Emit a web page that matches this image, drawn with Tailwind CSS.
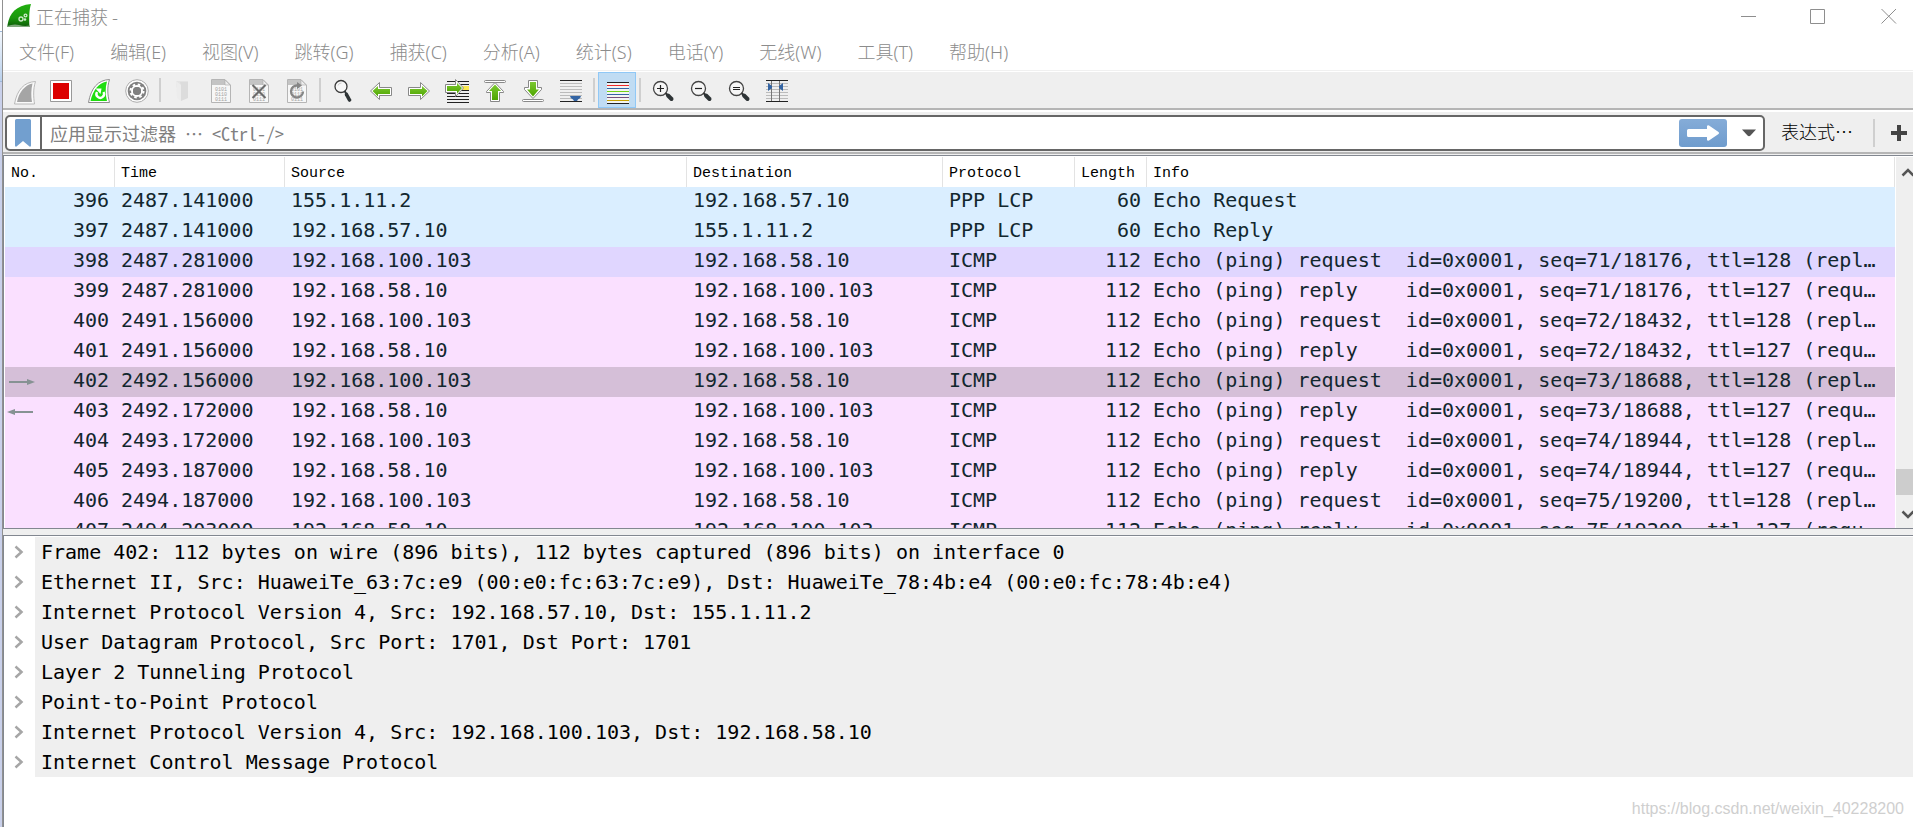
<!DOCTYPE html>
<html lang="zh-CN">
<head>
<meta charset="utf-8">
<title>正在捕获 -</title>
<script src="https://cdn.jsdelivr.net/npm/@tailwindcss/browser@4"></script>
</head>
<body class="bg-white font-['Noto_Sans_CJK_SC',sans-serif]">
<div class="flex min-h-screen overflow-hidden">
  <!-- sliver of the desktop behind the window -->
  <div class="flex w-[2px] shrink-0 flex-col" aria-hidden="true">
    <div class="h-[31px] bg-white"></div>
    <div class="h-[51px] border-y border-[#9db8da] bg-linear-to-b from-[#f4f8fd] to-[#b9d0ec]"></div>
    <div class="grow bg-[#c9d0ea]"></div>
  </div>

  <div class="flex min-w-0 grow flex-col border-l border-[#919191]">
    <header class="flex h-[34px] items-start justify-between pl-1">
      <div class="flex items-center pt-1">
        <svg class="h-6 w-6" viewBox="0 0 24 24" aria-hidden="true">
          <defs>
            <linearGradient id="fin" x1="0" y1="0" x2="0" y2="1"><stop offset="0" stop-color="#22b010"/><stop offset=".6" stop-color="#1b970d"/><stop offset="1" stop-color="#0c5a08"/></linearGradient>
            <linearGradient id="grn" x1="0" y1="0" x2="0" y2="1"><stop offset="0" stop-color="#7cc832"/><stop offset="1" stop-color="#4fa600"/></linearGradient>
          </defs>
          <path d="M.5 21C2.500 9 9 1.500 24 0C22 6 22 15 22.500 23H.5Z" fill="url(#fin)"/>
          <path d="M0 22Q7 19.500 12 21T23 21.500V23H0Z" fill="#7fa87c"/>
          <g fill="none" stroke="#cfe9cb" stroke-width="1.300"><circle cx="14" cy="15" r="2"/><circle cx="18.500" cy="11.500" r="1.400"/><circle cx="18" cy="15.500" r=".7"/></g>
        </svg>
        <h1 class="ml-[5px] text-[18px] leading-6 font-light text-[#8a8a8a]">正在捕获 -</h1>
      </div>
      <div class="flex pt-2 pr-4">
        <button aria-label="最小化" class="mr-[53px]"><svg class="h-4 w-4" viewBox="0 0 16 16"><path d="M0 8.500H15" stroke="#8e8e8e"/></svg></button>
        <button aria-label="最大化" class="mr-[55px]"><svg class="h-4 w-4" viewBox="0 0 16 16"><path d="M.5 1.500H14.500V15.500H.5Z" fill="none" stroke="#8e8e8e"/></svg></button>
        <button aria-label="关闭"><svg class="h-4 w-4" viewBox="0 0 16 16"><path d="M.5 1L15 15.500M15 1L.5 15.500" stroke="#8e8e8e"/></svg></button>
      </div>
    </header>

    <nav class="flex h-[37px] items-center gap-9 border-b border-[#f0f0f0] pl-4 font-['Noto_Sans','Noto_Sans_CJK_SC',sans-serif] text-[18px] leading-6 font-light text-[#8c8c8c]">
      <button>文件(F)</button><button>编辑(E)</button><button>视图(V)</button><button>跳转(G)</button><button>捕获(C)</button><button>分析(A)</button><button>统计(S)</button><button>电话(Y)</button><button>无线(W)</button><button>工具(T)</button><button>帮助(H)</button>
    </nav>

    <div role="toolbar" class="mt-px flex h-[38px] items-center border-b-2 border-[#b5b5b5] bg-[#efefef] pl-px [&>button]:flex [&>button]:h-9 [&>button]:w-[38px] [&>button]:items-center [&>button]:justify-center [&_svg]:h-[25px] [&_svg]:w-6 [&_svg]:overflow-visible">
      <button aria-label="开始捕获"><svg viewBox="0 0 24 25"><path d="M3.500 26C6 12 13 4 24.500 3.500C22 11 22.500 19 23.500 26Z" fill="#fafafa" stroke="#b9b9b9"/><path d="M6 24C8 14 14 7 21.500 5.500C20 12 20 18 21 24Z" fill="#a5a5a5"/></svg></button>
      <button aria-label="停止捕获"><svg viewBox="0 0 24 25"><path d="M1.500 2.500H22.500V23.500H1.500Z" fill="#fff" stroke="#999"/><path d="M4 5H20V21H4Z" fill="#dc0000"/></svg></button>
      <button aria-label="重新开始捕获"><svg viewBox="0 0 24 25"><path d="M1.500 24.500C4 10 11 2 22.500 1.500C20 9 20.500 17 22.500 24.500Z" fill="#fff" stroke="#8d8d8d"/><path d="M3.500 23C6 12 12 4.500 20 3.500C18 10 18.500 17 20 23Z" fill="#1fdd10"/><path d="M10 14A3.800 3.800 0 1 0 16.500 14" fill="none" stroke="#fff" stroke-width="2.400"/><path d="M8.500 10.500H14.500L13.500 16Z" fill="#fff"/></svg></button>
      <button aria-label="捕获选项"><svg viewBox="0 0 24 25"><circle cx="12" cy="13" r="11.300" fill="#fff" stroke="#adadad"/><circle cx="12" cy="13" r="9.300" fill="#808080"/><circle cx="12" cy="13" r="5" fill="none" stroke="#fff" stroke-width="2"/><circle cx="12" cy="13" r="6.500" fill="none" stroke="#fff" stroke-width="2" stroke-dasharray="2.500 2.600"/><circle cx="12" cy="13" r="4" fill="#808080"/></svg></button>
      <span class="flex h-6 w-2 justify-center"><i class="w-0.5 bg-[#cfcfcf]"></i></span>
      <button aria-label="打开"><svg viewBox="0 0 24 25"><path d="M5 3H17V8H11V22L5 8Z" fill="#e4e4e4"/><path d="M9 4H17V20L10 23V8Z" fill="#dcdcdc"/><path d="M5 3L10 7V23L6 20Z" fill="#ececec"/></svg></button>
      <button aria-label="保存"><svg viewBox="0 0 24 25"><path d="M2.500 1.500H16L21.500 7V24.500H2.500Z" fill="#f7f7f7" stroke="#b5b5b5"/><path d="M3 2H16V7H3Z" fill="#c4c4c4"/><path d="M16 2V7H21Z" fill="#ededed" stroke="#aaa" stroke-width=".6"/><g font-family="Liberation Mono" font-size="5" fill="#a2a2a2"><text x="6" y="13">0101</text><text x="6" y="18">0110</text><text x="6" y="23">0111</text></g></svg></button>
      <button aria-label="关闭文件"><svg viewBox="0 0 24 25"><path d="M2.500 1.500H16L21.500 7V24.500H2.500Z" fill="#f7f7f7" stroke="#b5b5b5"/><path d="M3 2H16V7H3Z" fill="#c4c4c4"/><path d="M16 2V7H21Z" fill="#ededed" stroke="#aaa" stroke-width=".6"/><g font-family="Liberation Mono" font-size="5" fill="#a2a2a2"><text x="6" y="13">0101</text><text x="6" y="18">0110</text><text x="6" y="23">0111</text></g><path d="M5.500 7L18.500 20M18.500 7L5.500 20" stroke="#6b6b6b" stroke-width="2"/></svg></button>
      <button aria-label="重新加载"><svg viewBox="0 0 24 25"><path d="M2.500 1.500H16L21.500 7V24.500H2.500Z" fill="#f7f7f7" stroke="#b5b5b5"/><path d="M3 2H16V7H3Z" fill="#c4c4c4"/><path d="M16 2V7H21Z" fill="#ededed" stroke="#aaa" stroke-width=".6"/><g font-family="Liberation Mono" font-size="5" fill="#a2a2a2"><text x="6" y="13">0101</text><text x="6" y="18">0110</text><text x="6" y="23">0111</text></g><path d="M12.500 7.500A6 6 0 1 0 18 13.500" fill="none" stroke="#858585" stroke-width="2.300"/><path d="M12 4L17 7.500L12 11Z" fill="#858585"/></svg></button>
      <span class="flex h-6 w-2 justify-center"><i class="w-0.5 bg-[#cfcfcf]"></i></span>
      <button aria-label="查找"><svg viewBox="0 0 24 25"><circle cx="10" cy="8.500" r="6" fill="#f8f8f8" stroke="#3a3a3a" stroke-width="1.300"/><path d="M7 7.500A3.500 3.500 0 0 1 10.500 5" fill="none" stroke="#ccc"/><path d="M13.500 13L15.500 16" stroke="#2e3436" stroke-width="2"/><path d="M15.500 16.500L18.500 22" stroke="#2e3436" stroke-width="3.600" stroke-linecap="round"/></svg></button>
      <button aria-label="上一个分组"><svg viewBox="0 0 24 25"><path d="M1.500 13L10.500 4.500V9.500H22.500V17.500H10.500V21.500Z" fill="#fff" stroke="#888" stroke-linejoin="round"/><path d="M3.500 13L9 8V11H21V16H9V18.500Z" fill="url(#grn)"/></svg></button>
      <button aria-label="下一个分组"><svg viewBox="0 0 24 25"><path d="M22.500 13L13.500 4.500V9.500H1.500V17.500H13.500V21.500Z" fill="#fff" stroke="#888" stroke-linejoin="round"/><path d="M20.500 13L15 8V11H3V16H15V18.500Z" fill="url(#grn)"/></svg></button>
      <button aria-label="转到分组"><svg viewBox="0 0 24 25"><path d="M17 8H24V12H17Z" fill="#fce94f"/><path d="M2 3.500H24M2 6.500H24M2 15.500H24M2 18.500H24M2 21.500H24M2 24.500H24M16 12.500H24" stroke="#222"/><path d="M18.500 10L10.500 1.500V6.500H.5V14.500H10.500V18.500Z" fill="#fff" stroke="#888" stroke-linejoin="round"/><path d="M17 10L12 5V8H2V13H12V15.500Z" fill="url(#grn)"/></svg></button>
      <button aria-label="首个分组"><svg viewBox="0 0 24 25"><rect x="1.500" y="2.500" width="21" height="2" rx="1" fill="#fff" stroke="#888"/><path d="M12 4.500L20.500 13.500V14.500H16.500V23.500H7.500V14.500H3.500V13.500Z" fill="#fff" stroke="#888" stroke-linejoin="round"/><path d="M12 6.500L18 13H15V22H9V13H6Z" fill="url(#grn)"/></svg></button>
      <button aria-label="最新分组"><svg viewBox="0 0 24 25"><rect x="1.500" y="21.500" width="21" height="2" rx="1" fill="#fff" stroke="#888"/><path d="M12 20.500L20.500 11.500V9.500H16.500V2.500H7.500V9.500H3.500V11.500Z" fill="#fff" stroke="#888" stroke-linejoin="round"/><path d="M12 18.500L18 11.500H15V4H9V11.500H6Z" fill="url(#grn)"/></svg></button>
      <button aria-label="自动滚动"><svg viewBox="0 0 24 25"><path d="M1 2.500H23M1 23.500H23" stroke="#222"/><path d="M1 5.500H23M1 8.500H23M1 11.500H23M1 14.500H23M1 17.500H23M1 20.500H23" stroke="#bbb"/><path d="M11 18H22Q21.500 21 19 21.500L18 23H15L14 21.500Q11.500 21 11 18Z" fill="#3465a4"/></svg></button>
      <span class="flex h-6 w-2 justify-center"><i class="w-0.5 bg-[#cfcfcf]"></i></span>
      <button aria-label="着色分组" aria-pressed="true" class="border border-[#90c8f6] bg-[#c0dcf3]"><svg viewBox="0 0 24 25"><path d="M2 4H24V25H2Z" fill="#f2f4f4"/><path d="M2 4.500H24M2 25.500H24" stroke="#222"/><path d="M2 7.500H24" stroke="#ef2929"/><path d="M2 10.500H24M2 16.500H24" stroke="#3465a4"/><path d="M2 13.500H24" stroke="#73d216"/><path d="M2 19.500H24" stroke="#75507b"/><path d="M2 22.500H24" stroke="#c4a000"/></svg></button>
      <span class="flex h-6 w-2 justify-center"><i class="w-0.5 bg-[#cfcfcf]"></i></span>
      <button aria-label="放大"><svg viewBox="0 0 24 25"><circle cx="9.500" cy="10.500" r="7" fill="#f6f6f6" stroke="#444" stroke-width="1.300"/><path d="M6 10.500H13M9.500 7V14" stroke="#222" stroke-width="1.200"/><path d="M14.500 15L17 17.500" stroke="#333" stroke-width="2"/><path d="M17 17.500L20.500 21" stroke="#2e3436" stroke-width="4" stroke-linecap="round"/></svg></button>
      <button aria-label="缩小"><svg viewBox="0 0 24 25"><circle cx="9.500" cy="10.500" r="7" fill="#f6f6f6" stroke="#444" stroke-width="1.300"/><path d="M6 10.500H13" stroke="#222" stroke-width="1.200"/><path d="M14.500 15L17 17.500" stroke="#333" stroke-width="2"/><path d="M17 17.500L20.500 21" stroke="#2e3436" stroke-width="4" stroke-linecap="round"/></svg></button>
      <button aria-label="正常大小"><svg viewBox="0 0 24 25"><circle cx="9.500" cy="10.500" r="7" fill="#f6f6f6" stroke="#444" stroke-width="1.300"/><path d="M6 9.500H13M6 11.500H13" stroke="#222"/><path d="M14.500 15L17 17.500" stroke="#333" stroke-width="2"/><path d="M17 17.500L20.500 21" stroke="#2e3436" stroke-width="4" stroke-linecap="round"/></svg></button>
      <button aria-label="调整列宽"><svg viewBox="0 0 24 25"><path d="M1 5.500H23M1 8.500H23M1 11.500H23M1 14.500H23M1 17.500H23M1 20.500H23" stroke="#bbb"/><path d="M1 2.500H23M1 23.500H23" stroke="#222"/><path d="M6.500 3V23M14.500 3V23" stroke="#777"/><path d="M3 5L7 8V10L3 13ZM18 5L14 8V10L18 13Z" fill="#3465a4"/></svg></button>
    </div>

    <form class="flex h-[44px] items-center border-t-2 border-b-2 border-t-white border-b-[#b5b5b5] bg-[#efefef] pt-0.5 pl-0.5" onsubmit="return false">
      <div class="flex h-9 min-w-0 grow items-center rounded-[5px] border-2 border-[#666] bg-white pr-[7px]">
        <button type="button" aria-label="书签" class="flex h-8 w-[35px] shrink-0 items-center justify-center border-r-2 border-[#666] pr-px">
          <svg class="h-7 w-4" viewBox="0 0 16 28"><path d="M0 1.500Q0 0 1.500 0H14.500Q16 0 16 1.500V26.500Q16 28 14.500 27.500L8 22L1.500 27.500Q0 28 0 26.500Z" fill="#729fcf"/></svg>
        </button>
        <input type="text" aria-label="显示过滤器" placeholder="应用显示过滤器 ⋯ &lt;Ctrl-/&gt;" class="h-8 min-w-0 grow pl-2 font-['Noto_Sans_Mono_CJK_SC','Noto_Sans_CJK_SC',monospace] text-[18px] font-light outline-none placeholder:text-[#808080]">
        <button aria-label="应用" class="flex h-7 w-12 items-center justify-center rounded-[3px] bg-linear-to-b from-[#85acd8] to-[#6f9ccd]">
          <svg class="h-4 w-8" viewBox="0 0 32 16"><path d="M1.500 4H20V1Q20.500 0 22 .5L31.500 7Q32.500 8 31.500 9L22 15.500Q20.500 16 20 15V12H1.500Q0 12 0 10.500V5.500Q0 4 1.500 4Z" fill="#fff"/></svg>
        </button>
        <button type="button" aria-label="历史" class="ml-[15px]"><svg class="h-2 w-3.5" viewBox="0 0 14 8"><path d="M0 .5H14L8.500 6.500Q7 8 5.500 6.500Z" fill="#555"/></svg></button>
      </div>
      <button type="button" class="ml-4 pb-1 text-[18px] leading-6 font-light text-black">表达式⋯</button>
      <i class="mr-4 ml-5 h-7 w-0.5 bg-[#cfcfcf]"></i>
      <button type="button" aria-label="添加" class="mr-1.5"><svg class="h-4 w-4" viewBox="0 0 16 16"><path d="M8 0V16M0 8H16" stroke="#444" stroke-width="4"/></svg></button>
    </form>

    <main class="flex grow flex-col border-t border-[#f0f0f0] bg-[#efefef]">
      <section class="flex h-[374px] border-y border-l border-[#828790] bg-white pt-px pl-px">
        <div class="min-w-0 grow overflow-hidden">
          <table class="w-full table-fixed border-separate border-spacing-0 text-left whitespace-pre text-[#12272e] [&_td]:overflow-hidden [&_td]:p-0 [&_td]:pl-1.5 [&_td]:align-top [&_th]:border-r [&_th]:border-[#e3e3e3] [&_th]:p-0 [&_th]:pt-1 [&_th]:pl-1.5">
            <colgroup><col class="w-[110px]"><col class="w-[170px]"><col class="w-[402px]"><col class="w-[256px]"><col class="w-[132px]"><col class="w-[72px]"><col></colgroup>
            <thead class="font-['Liberation_Mono',monospace] text-[15px] text-black">
              <tr class="h-[30px] [&>th]:font-normal"><th scope="col">No.</th><th scope="col">Time</th><th scope="col">Source</th><th scope="col">Destination</th><th scope="col">Protocol</th><th scope="col">Length</th><th scope="col">Info</th></tr>
            </thead>
            <tbody id="packets" class="font-['DejaVu_Sans_Mono',monospace] text-[20px] leading-[26px]"></tbody>
          </table>
        </div>
        <div class="ml-px flex w-[17px] shrink-0 flex-col items-end overflow-hidden bg-[#efefef]" role="scrollbar" aria-controls="packets" aria-valuenow="88">
          <svg class="mt-2.5 h-3 w-3" viewBox="0 0 12 12"><path d="M1.500 8.500L7 3L12.500 8.500" fill="none" stroke="#555" stroke-width="2.500"/></svg>
          <span class="mt-[290px] h-[26px] w-full bg-[#cdcdcd]"></span>
          <svg class="mt-3.5 h-3 w-3" viewBox="0 0 12 12"><path d="M1.500 2.500L7 8L12.500 2.500" fill="none" stroke="#555" stroke-width="2.500"/></svg>
        </div>
      </section>

      <section class="mt-1.5 flex grow flex-col border-t border-l border-[#828790] bg-white pt-px pl-px">
        <ul id="details" class="font-['DejaVu_Sans_Mono',monospace] text-[20px] leading-[30px] text-black"></ul>
        <p class="mt-auto pr-[9px] pb-1.5 text-right font-['Liberation_Sans',sans-serif] text-[16px] leading-6 text-[#cfcfcf]">https://blog.csdn.net/weixin_40228200</p>
      </section>
    </main>
  </div>
</div>

<script>
const A = '192.168.100.103', B = '192.168.58.10';
const ping = (no, time, req, seq, peer) => [no, time, req ? A : B, req ? B : A, 'ICMP', 112,
  `Echo (ping) ${req ? 'request' : 'reply  '}  id=0x0001, seq=${seq}, ttl=${req ? 128 : 127} (${req ? 'reply' : 'request'} in ${peer})`];
const packets = [
  [396, '2487.141000', '155.1.11.2', '192.168.57.10', 'PPP LCP', 60, 'Echo Request'],
  [397, '2487.141000', '192.168.57.10', '155.1.11.2', 'PPP LCP', 60, 'Echo Reply'],
  ping(398, '2487.281000', true, '71/18176', 399),
  ping(399, '2487.281000', false, '71/18176', 398),
  ping(400, '2491.156000', true, '72/18432', 401),
  ping(401, '2491.156000', false, '72/18432', 400),
  ping(402, '2492.156000', true, '73/18688', 403),
  ping(403, '2492.172000', false, '73/18688', 402),
  ping(404, '2493.172000', true, '74/18944', 405),
  ping(405, '2493.187000', false, '74/18944', 404),
  ping(406, '2494.187000', true, '75/19200', 407),
  ping(407, '2494.203000', false, '75/19200', 406),
];
const rowColor = no => no < 398 ? 'bg-[#daeeff]' : no === 398 ? 'bg-[#e0d6ff]' : no === 402 ? 'bg-[#d5bfd8]' : 'bg-[#fae0ff]';
const arrows = {
  402: '<svg class="mt-1 ml-[-2px] h-2 w-[27px]" viewBox="0 0 27 8"><path d="M0 4H20" stroke="#869293" stroke-width="2"/><path d="M18 1L26 4L18 7Z" fill="#869293"/></svg>',
  403: '<svg class="mt-1 ml-[-4px] h-2 w-[27px]" viewBox="0 0 27 8"><path d="M6 4H26" stroke="#869293" stroke-width="2"/><path d="M8 1L0 4L8 7Z" fill="#869293"/></svg>',
};
document.getElementById('packets').innerHTML = packets.map(([no, time, src, dst, proto, len, info]) =>
  `<tr class="h-[30px] ${rowColor(no)}"><td><div class="flex items-center justify-between pr-1.5">${arrows[no] || '<span></span>'}<span>${no}</span></div></td>` +
  `<td>${time}</td><td>${src}</td><td>${dst}</td><td>${proto}</td><td><div class="pr-1.5 text-right">${len}</div></td><td><div class="truncate pr-3 whitespace-pre">${info}</div></td></tr>`).join('');

document.getElementById('details').innerHTML = [
  'Frame 402: 112 bytes on wire (896 bits), 112 bytes captured (896 bits) on interface 0',
  'Ethernet II, Src: HuaweiTe_63:7c:e9 (00:e0:fc:63:7c:e9), Dst: HuaweiTe_78:4b:e4 (00:e0:fc:78:4b:e4)',
  'Internet Protocol Version 4, Src: 192.168.57.10, Dst: 155.1.11.2',
  'User Datagram Protocol, Src Port: 1701, Dst Port: 1701',
  'Layer 2 Tunneling Protocol',
  'Point-to-Point Protocol',
  'Internet Protocol Version 4, Src: 192.168.100.103, Dst: 192.168.58.10',
  'Internet Control Message Protocol',
].map(t => `<li class="flex"><button aria-label="展开" class="flex h-[30px] w-[30px] shrink-0 items-center justify-center pr-0.5"><svg class="h-3.5 w-2.5" viewBox="0 0 10 14"><path d="M1.500 1.500L7.500 7L1.500 12.500" fill="none" stroke="#a6a6a6" stroke-width="2.500"/></svg></button><span class="grow bg-[#efefef] pl-1.5">${t}</span></li>`).join('');
</script>
</body>
</html>
